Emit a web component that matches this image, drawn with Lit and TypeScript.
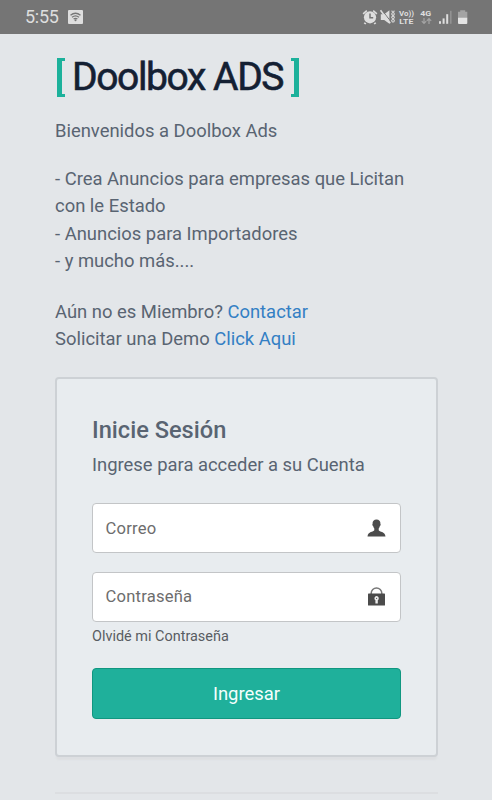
import { LitElement, html, css } from "lit";
import { customElement } from "lit/decorators.js";

@customElement("status-bar")
class StatusBar extends LitElement {
  static styles = css`
    :host { display: block; background: #757575; height: 34px; color: #dedede; }
    .bar { display: flex; height: 33px; align-items: center; justify-content: space-between; padding: 0 24px 0 25px; }
    .left { display: flex; align-items: center; gap: 9px; }
    .time { font-size: 18px; line-height: 32px; letter-spacing: -0.3px; }
    svg { display: block; }
  `;
  render() {
    return html`<div class="bar">
      <div class="left">
        <span class="time">5:55</span>
        <svg width="15" height="14" viewBox="0 0 15 14">
          <rect width="15" height="14" rx="1" fill="#dedede" />
          <g fill="none" stroke="#777" stroke-width="1.3">
            <path d="M2.5 5.3Q7.5 1.2 12.5 5.3" /><path d="M4 7.2Q7.5 4.4 11 7.2" /><path d="M5.6 9Q7.5 7.6 9.4 9" />
          </g>
          <circle cx="7.5" cy="10.2" r="1" fill="#777" />
        </svg>
      </div>
      <svg width="106" height="18" viewBox="362 6 106 18">
        <g fill="#dedede">
          <circle cx="370" cy="15.3" r="6.1" />
          <path d="M362.6 11.2 366.3 8l1 1.2-3.7 3.2zM377.4 11.2 373.7 8l-1 1.2 3.7 3.2zM364.8 20.2l1.6 1.2-1.2 1.1-1.5-1.2zM375.2 20.2l-1.6 1.2 1.2 1.1 1.5-1.2z" />
          <path d="M380.8 12.3h3.400l5.200-4v13.500l-5.200-3.800h-3.400z" />
        </g>
        <path d="M370 11.5v4.3h3.2" fill="none" stroke="#757575" stroke-width="1.5" />
        <path d="M381.9 8.1 390.600 19.200" stroke="#757575" stroke-width="1" />
        <path d="M380.5 8.2 390.2 21.3" stroke="#dedede" stroke-width="1.5" />
        <path d="M391.6 8.600l1.200 1.600-1.200 1.700 1.200 1.700-1.200 1.700 1.200 1.700-1.200 1.700 1.200 1.700M394.400 8.600l-1 1.600 1 1.700-1 1.700 1 1.700-1 1.700 1 1.700-1 1.700" fill="none" stroke="#d2d2d2" stroke-width="1.1" />
        <g fill="#dedede" font-family="Roboto, sans-serif" font-weight="700" font-size="8">
          <text x="399" y="13.800" textLength="15" lengthAdjust="spacingAndGlyphs">Vo))</text>
          <text x="399.3" y="22.200" textLength="14" lengthAdjust="spacingAndGlyphs">LTE</text>
          <text x="420.3" y="13.800" textLength="11" lengthAdjust="spacingAndGlyphs">4G</text>
        </g>
        <path d="M424 16v5.3m-2.2-2.2 2.2 2.2 2.2-2.2M429 22v-5.3m-2.2 2.2 2.2-2.2 2.2 2.2" fill="none" stroke="#a4a4a4" stroke-width="1.2" />
        <g fill="#dedede">
          <rect x="439" y="19.2" width="2" height="2.6" /><rect x="442.6" y="16.4" width="2" height="5.4" />
          <rect x="446.2" y="12.2" width="2" height="9.6" />
        </g>
        <rect x="450" y="8.8" width="1.6" height="13" fill="#929292" />
        <path d="M458 9.7h2.2V8.2h5v1.5h2.1v6.5H458z" fill="#a4a4a4" />
        <path d="M458 15.8h9.3v5.2q0 1-1 1H459q-1 0-1-1z" fill="#e4e4e4" />
      </svg>
    </div>`;
  }
}

@customElement("icon-field")
class IconField extends LitElement {
  static properties = { label: {}, icon: {} };
  declare label: string;
  declare icon: string;
  static styles = css`
    :host { display: block; }
    .field { box-sizing: border-box; height: 50px; display: flex; align-items: center; justify-content: space-between;
      background: #fff; border: 1px solid #c3c5c7; border-radius: 4px; padding: 0 14px 0 12.5px; color: #6d6d6d;
      font-size: 16.6px; letter-spacing: 0.2px; }
    svg { display: block; }
  `;
  render() {
    return html`<div class="field">
      <span>${this.label}</span>
      ${this.icon === "user"
        ? html`<svg width="19" height="18" viewBox="0 0 19 18"><path fill="#4b4b4b" d="M9.5.4C7 .4 5.3 2.2 5.6 4.7 5 5 5.5 6.8 6.2 7.2c.2 1 .6 1.7 1.1 2.3v1.8C6.600 13 1 12.500.5 17.500h18C18 12.500 12.400 13 11.700 11.300v-1.800c.5-.6.9-1.300 1.100-2.300.7-.4 1.200-2.200.6-2.500C13.700 2.200 12 .4 9.500.4z" /></svg>`
        : html`<svg width="19" height="19" viewBox="0 0 19 19"><path d="M4.200 7.500V6.300a5.300 5.300 0 0 1 10.600 0V7.500" fill="none" stroke="#777" stroke-width="1.500" /><rect x="1" y="6.600" width="17" height="12" rx=".6" fill="#4b4b4b" /><path d="M9.600 9.100a2.300 2.300 0 0 1 1.200 4.200v3.200H8.400v-3.200a2.300 2.300 0 0 1 1.200-4.200z" fill="#eee" /><circle cx="9.600" cy="11.300" r=".6" fill="#4b4b4b" /></svg>`}
    </div>`;
  }
}

@customElement("app-root")
class AppRoot extends LitElement {
  static styles = css`
    :host { display: block; height: 800px; overflow: hidden; background: #e3e6e9; font-family: Roboto, sans-serif; color: #596472; }
    .page { padding: 0 54px 0 55px; }
    .logo { display: flex; align-items: center; height: 49px; margin-top: 17px; color: #142033; }
    .name { font-size: 39px; line-height: 49px; letter-spacing: -1.4px; -webkit-text-stroke: 0.6px #142033; margin: 3px 7.5px 0 7px; white-space: nowrap; }
    .bracket { box-sizing: border-box; width: 8px; height: 39px; border: solid #1cb19b; margin-top: 3px; }
    .open { border-width: 3px 0 3px 5px; margin-left: 2px; }
    .close { border-width: 3px 5px 3px 0; }
    .text { font-size: 18.42px; line-height: 27.4px; margin: 0; white-space: nowrap; }
    .welcome { margin-top: 16.5px; }
    .list { margin-top: 21px; }
    .links { margin-top: 23.5px; }
    a { color: #337fc4; text-decoration: none; }
    .card { box-sizing: border-box; height: 380px; margin-top: 24.3px; border: 2px solid #cdd1d5; border-radius: 4px; background: #e8ecef; padding: 34px 35px 0; box-shadow: 0 4px 2px -1px #dddfe2; }
    h1 { margin: 0 0 3.6px; font-size: 23.6px; line-height: 34px; font-weight: 500; }
    .user { margin-top: 25px; }
    .pass { margin-top: 18.500px; }
    .forgot { font-size: 14.45px; line-height: 20px; margin-top: 5.500px; color: #585c62; }
    .button { box-sizing: border-box; display: flex; width: 100%; height: 51px; margin-top: 21px; align-items: center; justify-content: center; background: #1fb09b; border: 1px solid #109780; border-radius: 4px; color: #f4fffd; font: 18.42px Roboto, sans-serif; }
    .rule { height: 2px; margin-top: 35px; background: #dcdee1; }
  `;
  render() {
    return html`<status-bar></status-bar>
      <main class="page">
        <div class="logo"><span class="bracket open"></span><span class="name">Doolbox ADS</span><span class="bracket close"></span></div>
        <p class="text welcome">Bienvenidos a Doolbox Ads</p>
        <p class="text list">- Crea Anuncios para empresas que Licitan<br />con le Estado<br />- Anuncios para Importadores<br />- y mucho más....</p>
        <p class="text links">Aún no es Miembro? <a href="#">Contactar</a><br />Solicitar una Demo <a href="#">Click Aqui</a></p>
        <section class="card">
          <h1>Inicie Sesión</h1>
          <p class="text">Ingrese para acceder a su Cuenta</p>
          <icon-field class="user" label="Correo" icon="user"></icon-field>
          <icon-field class="pass" label="Contraseña" icon="lock"></icon-field>
          <div class="forgot">Olvidé mi Contraseña</div>
          <button class="button">Ingresar</button>
        </section>
        <div class="rule"></div>
      </main>`;
  }
}
